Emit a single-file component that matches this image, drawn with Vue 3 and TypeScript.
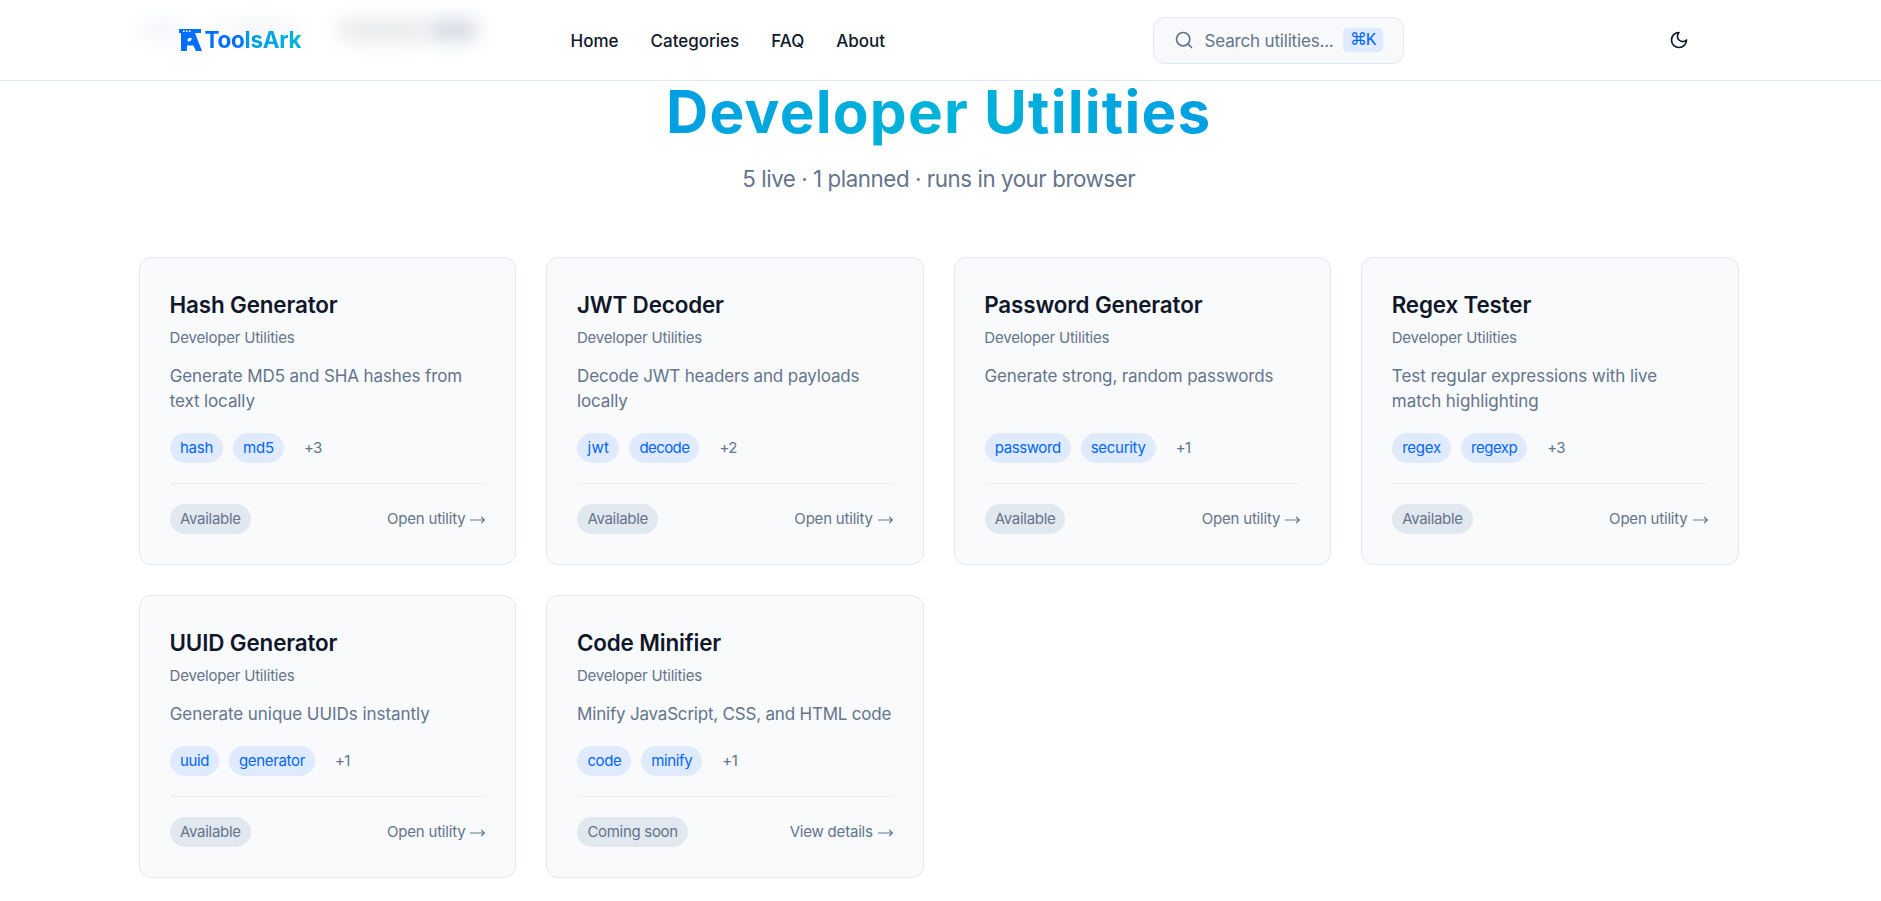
<script setup lang="ts">
interface Tag {
  label: string
  tracking: number
}

interface Utility {
  name: string
  description: string
  tracking: number
  tags: Tag[]
  more: number
  live: boolean
}

const links: string[] = ['Home', 'Categories', 'FAQ', 'About']

const utilities: Utility[] = [
  {
    name: 'Hash Generator',
    description: 'Generate MD5 and SHA hashes from text locally',
    tracking: -0.11,
    tags: [{ label: 'hash', tracking: -0.27 }, { label: 'md5', tracking: -0.17 }],
    more: 3,
    live: true,
  },
  {
    name: 'JWT Decoder',
    description: 'Decode JWT headers and payloads locally',
    tracking: -0.16,
    tags: [{ label: 'jwt', tracking: 0.4 }, { label: 'decode', tracking: -0.57 }],
    more: 2,
    live: true,
  },
  {
    name: 'Password Generator',
    description: 'Generate strong, random passwords',
    tracking: -0.13,
    tags: [{ label: 'password', tracking: -0.4 }, { label: 'security', tracking: -0.29 }],
    more: 1,
    live: true,
  },
  {
    name: 'Regex Tester',
    description: 'Test regular expressions with live match highlighting',
    tracking: -0.06,
    tags: [{ label: 'regex', tracking: -0.2 }, { label: 'regexp', tracking: -0.5 }],
    more: 3,
    live: true,
  },
  {
    name: 'UUID Generator',
    description: 'Generate unique UUIDs instantly',
    tracking: -0.05,
    tags: [{ label: 'uuid', tracking: -0.4 }, { label: 'generator', tracking: -0.33 }],
    more: 1,
    live: true,
  },
  {
    name: 'Code Minifier',
    description: 'Minify JavaScript, CSS, and HTML code',
    tracking: -0.2,
    tags: [{ label: 'code', tracking: -0.38 }, { label: 'minify', tracking: -0.38 }],
    more: 1,
    live: false,
  },
]
</script>

<template>
  <div class="page">
    <header class="topbar">
      <div class="haze" aria-hidden="true">
        <i class="haze-a"></i><i class="haze-b"></i><i class="haze-c"></i><i class="haze-d"></i>
      </div>
      <a class="brand">
        <svg class="mark" viewBox="0 0 23 22" width="23" height="22">
          <path fill="#006fff" fill-rule="evenodd" d="M0 0H22V4H16L23 22H17L14.3 16.5H8V22H2V4H0ZM8.5 10.5V12.3H11.5L13 9H9.8Z" />
          <path fill="#fff" d="M4 1.5h1.6v1.6H4zM7 1.5h1.6v1.6H7zM10 1.5h1.6v1.6H10z" />
        </svg>
        <span class="brand-name">ToolsArk</span>
      </a>
      <nav class="links">
        <a v-for="link in links" :key="link">{{ link }}</a>
      </nav>
      <div class="search">
        <svg viewBox="0 0 24 24" width="20" height="20" fill="none" stroke="currentColor" stroke-width="2" stroke-linecap="round" stroke-linejoin="round">
          <circle cx="11" cy="11" r="8" />
          <path d="m21 21-4.3-4.3" />
        </svg>
        <span class="placeholder">Search utilities...</span>
        <kbd><span class="cmd">⌘</span>K</kbd>
      </div>
      <button class="theme" aria-label="Toggle theme">
        <svg viewBox="0 0 24 24" width="20" height="20" fill="none" stroke="currentColor" stroke-width="2" stroke-linecap="round" stroke-linejoin="round">
          <path d="M12 3a6 6 0 0 0 9 9 9 9 0 1 1-9-9Z" />
        </svg>
      </button>
    </header>

    <main class="content">
      <h1>Developer Utilities</h1>
      <p class="summary">5 live · 1 planned · runs in your browser</p>
      <section class="grid">
        <article v-for="item in utilities" :key="item.name" class="card">
          <h2>{{ item.name }}</h2>
          <p class="category">Developer Utilities</p>
          <p class="description" :style="{ letterSpacing: item.tracking + 'px' }">{{ item.description }}</p>
          <div class="tags">
            <span v-for="tag in item.tags" :key="tag.label" class="tag" :style="{ letterSpacing: tag.tracking + 'px' }">{{ tag.label }}</span>
            <span class="more">+{{ item.more }}</span>
          </div>
          <footer class="foot">
            <span class="status">{{ item.live ? 'Available' : 'Coming soon' }}</span>
            <a class="action">
              <span>{{ item.live ? 'Open utility' : 'View details' }}</span>
              <svg class="arrow" viewBox="0 0 15 8" width="15" height="8" fill="none" stroke="currentColor" stroke-width="1.1">
                <path d="M0 4H14.2M11.2 1 14.4 4 11.2 7" />
              </svg>
            </a>
          </footer>
        </article>
      </section>
    </main>
  </div>
</template>

<style>
body { margin: 0; background: #fff; overflow: hidden; }
</style>

<style scoped>
* { box-sizing: border-box; }

.page {
  width: 100%;
  height: 901px;
  overflow: hidden;
  background: #fff;
  color: #0f172a;
  font-family: Inter, "Liberation Sans", sans-serif;
}

.topbar {
  position: relative;
  height: 81px;
  display: flex;
  align-items: center;
  padding-left: 179px;
  border-bottom: 1px solid #e2e8f0;
  background: #fff;
}

.haze { position: absolute; inset: 0; overflow: hidden; pointer-events: none; }
.haze i { position: absolute; top: 21px; height: 18px; border-radius: 9px; filter: blur(10px); }
.haze-a { left: 138px; width: 46px; background: #f1f5f9; }
.haze-b { left: 222px; width: 74px; background: #f3f5f6; }
.haze-c { left: 338px; width: 90px; background: #e3e4e5; }
.haze-d { left: 428px; width: 50px; background: #c9d1da; }

.brand { position: relative; display: flex; align-items: center; width: 391.5px; gap: 2.5px; }
.mark { flex: none; }
.brand-name {
  font-size: 22.5px;
  font-weight: 700;
  line-height: 30px;
  letter-spacing: -0.25px;
  background: linear-gradient(90deg, #006fff 0 37%, #0098e6 44%, #00b6d7 100%);
  -webkit-background-clip: text;
  background-clip: text;
  color: transparent;
}

.links {
  width: 582.5px;
  padding-top: 2px;
  display: flex;
  gap: 32px;
  font-size: 17px;
  font-weight: 500;
  line-height: 24px;
  white-space: nowrap;
}

.search {
  width: 251px;
  height: 47px;
  display: flex;
  align-items: center;
  padding-left: 20px;
  border: 1px solid #e2e8f0;
  border-radius: 12px;
  background: #f7f9fb;
  color: #64748b;
  font-size: 17px;
  white-space: nowrap;
}
.placeholder { width: 138px; margin-left: 10.6px; padding-top: 2px; letter-spacing: -0.18px; }
kbd {
  width: 40px;
  height: 24px;
  border-radius: 5px;
  background: #dfeafd;
  color: #0066ff;
  font: 17.5px/24px "Liberation Mono", monospace;
  letter-spacing: -1px;
  display: flex;
  justify-content: center;
}
.cmd { font: 200 17px/22px "DejaVu Sans Light", "DejaVu Sans", sans-serif; }

.theme { margin-left: 265px; width: 20px; height: 20px; padding: 0; border: 0; background: none; color: #0f172a; }
.theme svg { display: block; }

.content { width: 1599.5px; margin-left: 139px; }

h1 {
  margin: 0;
  height: 72px;
  font-size: 58.5px;
  line-height: 62px;
  font-weight: 700;
  letter-spacing: 1.2px;
  text-align: center;
  background: linear-gradient(90deg, #0078f8, #00b4d8 50%, #0078f8);
  -webkit-background-clip: text;
  background-clip: text;
  color: transparent;
}
.summary {
  margin: 0;
  height: 104px;
  padding-top: 10px;
  font-size: 22.3px;
  line-height: 32px;
  letter-spacing: -0.43px;
  text-align: center;
  color: #64748b;
}

.grid { display: grid; grid-template-columns: repeat(4, minmax(0, 1fr)); gap: 30px; }
.card {
  padding: 30px;
  border: 1px solid #e2e8f0;
  border-radius: 12px;
  background: #f9fafc;
  display: flex;
  flex-direction: column;
}
h2 { margin: 0 0 0 -0.5px; font-size: 22.4px; line-height: 34px; font-weight: 600; letter-spacing: -0.13px; }
.category { margin: 5px 0 0 -0.4px; font-size: 15px; line-height: 22px; letter-spacing: -0.2px; color: #64748b; }
.description { margin: 15px -2px 19px -0.3px; font-size: 17px; line-height: 25px; color: #64748b; }
.tags { display: flex; gap: 10px; margin-top: auto; }
.tag, .more, .status { height: 30px; padding: 0 10px; border-radius: 15px; font-size: 15px; line-height: 30px; }
.tag { background: #dfeafd; color: #0066ff; }
.more { color: #64748b; letter-spacing: -0.6px; }
.foot {
  display: flex;
  align-items: center;
  justify-content: space-between;
  margin-top: 20px;
  padding-top: 20px;
  border-top: 1px solid #ebeef3;
  font-size: 15px;
  line-height: 30px;
  color: #64748b;
}
.status { background: #e2e8f0; letter-spacing: -0.3px; }
.action { height: 30px; display: flex; align-items: center; gap: 5px; letter-spacing: -0.2px; white-space: nowrap; }
.arrow { flex: none; margin-top: 2px; }
</style>
